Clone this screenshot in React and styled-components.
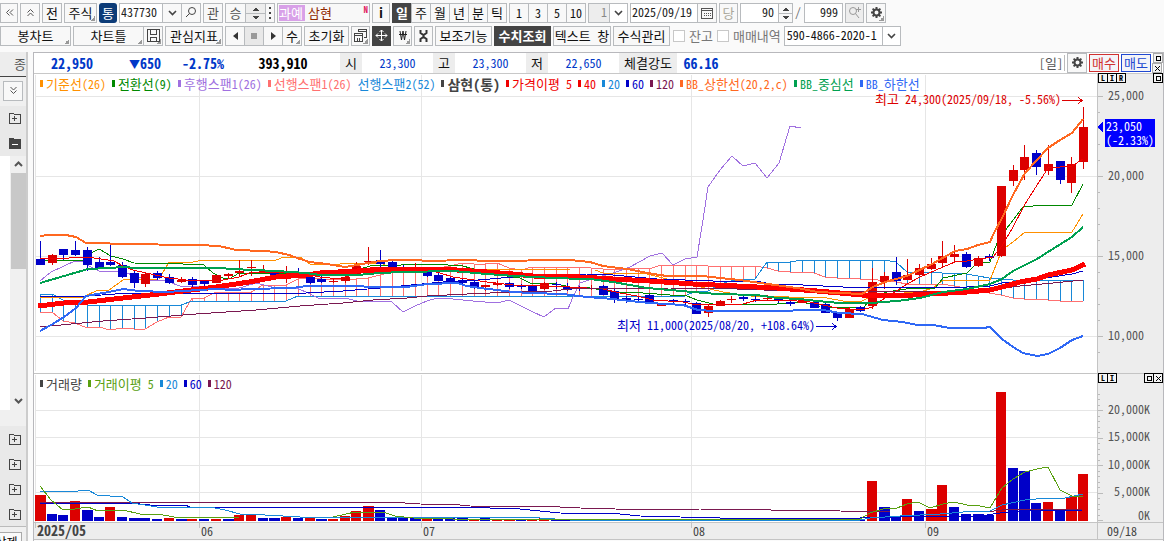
import React from 'react'
import styled, { createGlobalStyle, css } from 'styled-components'

const RED = '#dc0000'
const BLUE = '#0000c8'

// pixel x of the n-th candle
const cx = (i) => Math.round(40 + i * 11.72)

// direction, high, body top, body bottom, low
const candles = [
  ['b', 241, 259, 265, 265], ['r', 254, 255, 263, 265], ['b', 249, 249, 255, 260], ['b', 241, 250, 255, 256],
  ['b', 247, 250, 265, 271], ['b', 257, 262, 268, 268], ['b', 245, 262, 265, 266], ['b', 262, 265, 277, 278],
  ['b', 271, 273, 283, 288], ['r', 273, 274, 284, 287], ['b', 271, 273, 278, 280], ['b', 274, 277, 283, 284],
  ['r', 277, 280, 282, 283], ['b', 277, 279, 285, 287], ['b', 280, 281, 284, 286], ['r', 275, 275, 283, 283],
  ['r', 273, 274, 276, 279], ['r', 260, 271, 273, 277], ['r', 260, 267, 268, 276], ['r', 265, 271, 273, 273],
  ['b', 271, 272, 276, 276], ['r', 266, 275, 276, 283], ['b', 268, 272, 275, 275], ['b', 277, 277, 283, 284],
  ['b', 276, 279, 282, 283], ['r', 278, 281, 282, 283], ['r', 269, 277, 281, 283], ['r', 262, 266, 274, 274],
  ['r', 247, 261, 262, 265], ['b', 250, 260, 264, 270], ['b', 259, 262, 270, 270], ['b', 265, 268, 269, 270],
  ['r', 263, 268, 269, 270], ['b', 267, 272, 276, 277], ['b', 273, 275, 281, 281], ['b', 276, 278, 281, 284],
  ['b', 278, 280, 283, 284], ['b', 281, 282, 288, 289], ['r', 285, 285, 287, 291], ['r', 281, 283, 285, 286],
  ['b', 282, 283, 287, 289], ['b', 284, 285, 287, 289], ['b', 286, 286, 292, 292], ['r', 282, 283, 289, 290],
  ['b', 282, 284, 285, 289], ['b', 283, 287, 290, 291], ['b', 286, 287, 288, 291], ['r', 285, 288, 289, 290],
  ['b', 285, 286, 295, 295], ['b', 289, 291, 299, 303], ['b', 296, 298, 300, 303], ['b', 297, 299, 300, 302],
  ['b', 294, 295, 302, 303], ['r', 303, 303, 306, 306], ['b', 299, 300, 301, 304], ['b', 299, 301, 302, 305],
  ['b', 302, 303, 314, 314], ['r', 304, 306, 313, 317], ['r', 300, 301, 306, 306], ['r', 296, 299, 300, 303],
  ['b', 294, 297, 299, 301], ['b', 296, 299, 300, 302], ['r', 295, 298, 299, 300], ['b', 297, 298, 301, 303],
  ['b', 300, 302, 304, 306], ['r', 300, 300, 303, 303], ['b', 301, 302, 308, 308], ['b', 302, 304, 313, 313],
  ['b', 312, 313, 318, 321], ['r', 307, 309, 318, 318], ['b', 306, 307, 311, 312], ['r', 268, 282, 306, 309],
  ['r', 272, 276, 282, 289], ['b', 257, 272, 281, 285], ['r', 259, 275, 280, 280], ['r', 264, 268, 275, 276],
  ['r', 258, 264, 269, 270], ['r', 241, 256, 263, 268], ['r', 245, 254, 257, 262], ['b', 252, 254, 267, 268],
  ['r', 256, 258, 266, 267], ['b', 254, 256, 258, 261], ['r', 186, 186, 256, 257], ['r', 165, 170, 181, 186],
  ['r', 145, 157, 170, 180], ['b', 150, 153, 167, 175], ['r', 145, 164, 171, 175], ['b', 161, 161, 180, 184],
  ['r', 157, 164, 183, 193], ['r', 107, 127, 162, 169],
]

const spanA = [
  312, 312, 321, 323, 328, 327, 330, 328, 329, 329, 322, 317, 317, 298, 298, 292, 292, 292, 292, 285,
  285, 285, 279, 278, 279, 279, 279, 279, 278, 275, 272, 268, 268, 268, 268, 266, 263, 264, 264, 263,
  268, 270, 267, 267, 267, 267, 267, 268, 269, 269, 269, 268, 269, 265, 265, 265, 265, 266, 266, 266,
  266, 266, 268, 271, 272, 272, 273, 277, 278, 278, 279, 279, 281, 282, 284, 284, 284, 284, 286, 288,
  290, 293, 295, 298, 299, 299, 300, 301, 301, 301,
]
const spanB = [
  294, 294, 300, 301, ...Array(9).fill(305), ...Array(9).fill(301), ...Array(34).fill(296), 291, 291,
  284, 281, 280, 279, 262, 262, 262, ...Array(8).fill(260), 262, 272, 272, 272, 273, 273, 274, 276, 278, 279,
  280, 280, 280, 280, 280, 280, 280,
].slice(0, 90)

const lines = {
  lagging: '40,281 51,272 64,266 75,261 83,262 89,266 99,271 119,271 133,275 149,280 166,281 183,287 203,286 216,288 236,289 256,283 276,288 296,288 306,292 320,299 345,298 357,301 380,301 392,302 403,312 415,306 427,301 437,298 453,299 473,301 497,303 509,300 533,312 544,317 556,308 568,309 573,297 580,283 592,279 613,273 630,267 650,256 662,253 673,265 685,259 697,257 703,220 708,187 720,170 732,156 743,166 755,163 767,178 779,163 790,126 801,128',
  base: '40,297 83,297 98,290 109,290 123,280 159,279 169,262 193,262 203,260 276,260 284,257 300,257 310,264 340,264 380,263 393,268 467,268 473,269 570,270 595,270 603,273 647,274 667,279 687,284 710,289 723,292 750,296 827,298 843,301 862,301 873,295 920,292 933,288 943,280 990,280 1002,250 1013,242 1025,232 1072,232 1083,214',
  turn: '40,260 83,260 91,253 99,249 111,256 123,259 134,263 183,264 204,265 213,273 223,278 229,279 239,273 306,273 357,270 370,266 433,264 463,266 477,270 500,275 520,278 530,283 557,284 570,287 590,288 613,292 643,293 670,295 687,296 697,300 713,304 777,304 803,302 820,307 863,308 873,297 887,292 913,288 935,288 943,278 967,273 977,263 990,262 997,243 1007,228 1023,207 1043,205 1072,205 1083,184',
  ma5: '40,259 69,258 86,257 101,259 114,261 123,266 133,270 146,273 169,278 186,280 223,280 239,277 249,273 276,272 310,275 320,277 340,279 357,273 370,268 387,267 413,267 427,270 440,273 453,277 467,279 487,282 513,285 547,286 570,287 603,289 620,293 637,296 653,300 683,302 697,305 743,304 757,300 783,300 810,302 823,305 837,308 862,310 872,307 885,298 895,292 907,284 920,277 943,267 955,262 967,261 980,259 993,257 1002,246 1013,227 1025,204 1048,168 1072,166 1083,159',
  ma40: '38,306 64,303 88,302 123,298 159,294 183,291 216,287 249,282 276,277 306,275 320,273 357,271 400,270 430,269 457,270 487,272 513,274 533,276 580,277 613,279 650,281 693,284 737,286 777,288 817,291 840,293 862,295 897,296 930,294 967,292 990,290 1002,287 1020,282 1037,279 1048,275 1072,270 1085,264',
  ma60: '40,296 88,296 129,293 306,293 343,291 380,288 443,282 467,281 490,279 513,277 553,275 587,274 613,275 657,279 713,281 757,281 770,284 803,285 843,287 967,287 990,286 1002,283 1033,280 1072,274 1083,271',
  ma120: '40,327 103,321 146,318 196,314 256,310 300,306 343,303 373,300 407,298 427,296 467,294 513,292 553,291 570,289 670,288 737,289 790,291 913,292 990,290 1020,286 1053,283 1083,280',
  upper: '40,236 49,235 66,235 76,237 86,243 104,243 116,244 199,245 219,246 236,250 263,251 276,252 289,255 300,259 310,262 327,264 345,267 357,265 368,263 380,261 397,260 417,260 427,261 467,260 487,261 570,260 590,262 603,266 627,269 653,274 667,276 703,276 720,278 740,280 760,283 783,286 803,289 817,292 862,294 873,287 885,282 907,276 932,264 955,251 967,249 978,245 990,242 993,235 1002,218 1013,195 1025,173 1037,160 1048,148 1060,140 1072,133 1083,119',
  middle: '40,283 64,276 88,269 109,268 123,267 136,268 219,268 233,269 253,270 276,271 306,273 320,275 357,275 380,273 403,272 453,271 487,274 500,275 533,277 580,279 590,279 613,282 647,288 670,290 693,292 717,294 757,295 777,298 800,299 817,301 840,303 870,303 897,301 920,298 943,292 967,289 990,284 1002,279 1013,271 1037,259 1048,252 1072,237 1083,227',
  lower: '40,331 51,325 64,317 76,308 86,296 109,292 123,289 139,291 166,292 216,289 233,290 249,289 293,288 306,286 357,286 370,287 407,287 427,284 457,283 467,286 480,288 497,290 513,292 530,293 563,294 587,297 613,299 630,301 650,303 683,305 698,310 713,311 783,311 803,310 823,310 840,313 862,314 883,320 903,322 917,325 933,325 950,328 983,328 990,327 1002,339 1013,347 1023,353 1037,356 1048,354 1060,348 1072,340 1083,336',
}

// top of every volume bar, colour included
const volumes = (
  'r495 b514 b515 r501 b510 b517 r507 b517 b518 b518 b519 r518 b519 r519 b519 r519 b519 r515 r515 b518 ' +
  'b518 r517 b518 r517 b519 r519 r516 r511 r506 b510 b517 b518 b518 r518 b519 b518 b518 r519 b518 r520 ' +
  'r520 b520 r520 r518 b520 b520 b520 b520 r520 b520 b520 r520 b520 b520 r520 r520 b520 b520 r520 b520 ' +
  'r520 b520 r520 b520 b520 r520 r520 r520 r520 r520 b520 r481 b507 b517 r499 b511 r509 r485 b507 b514 ' +
  'b514 b515 r392 b468 b471 b503 r502 b511 r497 r474'
).split(' ')

const volLines = [
  ['#7a1850', '40,502 390,502 420,504 460,505 470,506 560,507 580,508 650,510 700,509 840,511 890,512 987,512 1002,510 1083,509'],
  [BLUE, '40,503 130,503 150,505 185,505 190,507 340,507 460,507 490,508 520,509 540,511 560,513 620,514 640,516 720,518 860,518 900,517 980,516 1000,513 1030,511 1083,510'],
  ['#1888d8', '40,491 69,492 88,490 97,495 123,497 132,503 157,507 210,507 225,510 240,514 265,515 300,517 470,517 540,518 570,520 860,520 870,518 900,516 940,514 975,511 990,511 1002,505 1025,500 1048,498 1065,498 1083,494'],
  ['#58a010', '40,486 51,500 63,510 75,509 88,507 98,511 110,510 123,510 140,514 163,515 180,518 240,517 333,517 355,512 383,512 395,516 413,518 453,519 860,519 870,513 883,509 897,508 907,504 918,502 930,508 943,504 954,502 967,505 980,506 990,508 1002,488 1013,479 1025,472 1037,469 1048,467 1060,490 1072,496 1083,497'],
]

const priceLegend = [
  ['기준선(26)', '#ff9000'],
  ['전환선(9)', '#008800'],
  ['후행스팬1(26)', '#a070e0'],
  ['선행스팬1(26)', '#ff7070'],
  ['선행스팬2(52)', '#1888d8', 'nomark'],
  ['삼현(통)', '#444', 'bold'],
  ['가격이평 5', '#f00000'],
  ['40', '#f00000'],
  ['20', '#1888d8'],
  ['60', BLUE],
  ['120', '#7a1850'],
  ['BB_상한선(20,2,c)', '#ff6820'],
  ['BB_중심선', '#00a050'],
  ['BB_하한선', '#2f68f5'],
]
const volumeLegend = [
  ['거래량', '#444'],
  ['거래이평 5', '#58a010'],
  ['20', '#1888d8'],
  ['60', BLUE],
  ['120', '#7a1850'],
]

const Chevron = () => (
  <svg width="9" height="6"><path d="M1 1l3.500 3.500L8 1" fill="none" stroke="#444" strokeWidth="1.600" /></svg>
)
const Gear = ({ color = '#444' }) => (
  <svg width="13" height="13" viewBox="-6.500 -6.500 13 13">
    <circle r="3" fill="none" stroke={color} strokeWidth="2" />
    {[0, 45, 90, 135, 180, 225, 270, 315].map((a) => (
      <rect key={a} x="-1" y="-5.500" width="2" height="2.500" fill={color} transform={`rotate(${a})`} />
    ))}
  </svg>
)
const Search = ({ plus, color = '#444' }) => (
  <svg width="13" height="13" fill="none" stroke={color}>
    <circle cx={plus ? 5 : 7} cy="5" r="3.500" />
    <path d={plus ? 'M7.500 7.500L11 12M10.500 1v5M8 3.500h5' : 'M4.500 7.500L1 11'} />
  </svg>
)
const Spin = ({ w = 20 }) => (
  <svg width={w} height="18" shapeRendering="crispEdges">
    <path d={`M${w / 2 - 3} 7h6l-3-4zM${w / 2 - 3} 12h6l-3 4z`} fill="#444" />
    <path d={`M0 9.500h${w}`} stroke="#b8bbbe" />
  </svg>
)
const Doubles = ({ turn = 0 }) => (
  <svg width="9" height="9" viewBox="0 0 9 9">
    <path d="M4.500 1.500l-3 3 3 3M8 1.500l-3 3 3 3" fill="none" stroke="#555" transform={`rotate(${turn} 4.500 4.500)`} />
  </svg>
)
const Folder = ({ filled }) => (
  <svg width="12" height="12" shapeRendering="crispEdges">
    <path d="M.5 1.500h4l1 1h6v9H.5z" fill={filled ? '#444' : 'none'} stroke="#444" />
    <path d={filled ? 'M3 7.500h6' : 'M3 6.500h5M5.500 4v5'} stroke={filled ? '#fff' : '#444'} />
  </svg>
)

// hangul runs are set one size up so that they take two latin cells
const runs = (text, Tag) => text.split(/([가-힣]+)/).map((s, i) => (i % 2 ? <Tag key={i}>{s}</Tag> : s))

const Legend = ({ items }) => (
  <LegendRow>
    {items.map(([text, color, kind], i) => (
      <LegendItem key={i} $color={color} $bold={kind === 'bold'}>
        {kind !== 'nomark' && <Mark $color={color} />}
        <span>{kind === 'bold' ? text : runs(text, Ko)}</span>
      </LegendItem>
    ))}
  </LegendRow>
)

const Candle = ({ i, d: [dir, high, top, bottom, low] }) => {
  const color = dir === 'r' ? RED : BLUE
  return (
    <g fill={color}>
      <rect x={cx(i)} y={high} width="1" height={low - high} />
      <rect x={cx(i) - 4} y={top} width="9" height={bottom - top} />
    </g>
  )
}

const Line = ({ points, color, w = 1 }) => (
  <polyline points={points} fill="none" stroke={color} strokeWidth={w} strokeLinejoin="round" />
)

const PricePlot = () => (
  <Plot $h={299}>
    <g transform="translate(-34 -74)">
      <g fill="#e6e6e6">
        {[96, 176, 256, 336].map((y) => <rect key={y} x="36" y={y} width="3000" height="1" />)}
        {[35, 199, 421, 691, 925].map((x) => <rect key={x} x={x} y="75" width="1" height="296" />)}
      </g>
      {spanA.map((a, i) => (
        <rect key={i} x={cx(i)} y={Math.min(a, spanB[i])} width="1" height={Math.abs(a - spanB[i])}
          fill={a < spanB[i] ? '#ff7070' : '#1888d8'} />
      ))}
      <Line color="#ff7070" points={spanA.map((y, i) => `${cx(i)},${y}`).join(' ')} />
      <Line color="#1888d8" points={spanB.map((y, i) => `${cx(i)},${y}`).join(' ')} />
      <Line color="#a070e0" points={lines.lagging} />
      <Line color="#ff9000" points={lines.base} />
      <Line color="#008800" points={lines.turn} />
      {candles.map((d, i) => <Candle key={i} i={i} d={d} />)}
      <Line color="#f00000" points={lines.ma5} />
      <Line color="#7a1850" points={lines.ma120} />
      <Line color={BLUE} points={lines.ma60} />
      <Line color="#ff0000" points={lines.ma40} w={5} />
      <Line color="#ff6820" points={lines.upper} w={2} />
      <Line color="#00a050" points={lines.middle} w={2} />
      <Line color="#2f68f5" points={lines.lower} w={2} />
      <Note x="875" y="104" fill="#dc0000">{runs('최고 24,300(2025/09/18, -5.56%)', KoSvg)}</Note>
      <path d="M1062 100.500h20M1078 97l4 3.500-4 3.500" fill="none" stroke="#dc0000" />
      <Note x="617" y="330" fill={BLUE}>{runs('최저 11,000(2025/08/20, +108.64%)', KoSvg)}</Note>
      <path d="M816 326.500h20M832 323l4 3.500-4 3.500" fill="none" stroke={BLUE} />
    </g>
  </Plot>
)

const VolumePlot = () => (
  <Plot $h={148}>
    <g transform="translate(-34 -374)">
      <g fill="#e6e6e6">
        {[410, 437, 465, 492].map((y) => <rect key={y} x="36" y={y} width="3000" height="1" />)}
        {[35, 199, 421, 691, 925].map((x) => <rect key={x} x={x} y="375" width="1" height="147" />)}
      </g>
      {volumes.map((v, i) => (
        <rect key={i} x={cx(i) - 5} y={v.slice(1)} width={i % 4 ? 10 : 11} height={521 - v.slice(1)}
          fill={v[0] === 'r' ? RED : BLUE} />
      ))}
      {volLines.map(([color, points]) => <Line key={color} color={color} points={points} />)}
    </g>
  </Plot>
)

const PriceAxis = () => (
  <Plot $h={299}>
    <g transform="translate(-1098 -74)">
      {Array.from({ length: 17 }, (_, i) => 96 + i * 16).map((y, i) => (
        <rect key={y} x="1098" y={y} width={i % 5 ? 2 : 5} height="1" fill="#bbb" />
      ))}
      {[25, 20, 15, 10].map((n, i) => <Note key={n} x="1108" y={100 + i * 80} fill="#555">{`${n},000`}</Note>)}
      <path d="M1097 127l6-6v12z" fill="#0000ff" />
      <rect x="1105" y="119" width="50" height="28" fill="#0000ff" />
      <Note x="1106" y="131" fill="#fff">23,050</Note>
      <Note x="1106" y="145" fill="#fff">(-2.33%)</Note>
    </g>
  </Plot>
)

const VolumeAxis = () => (
  <Plot $h={148}>
    <g transform="translate(-1098 -374)">
      {Array.from({ length: 24 }, (_, i) => Math.round(520 - i * 5.5)).map((y, i) => (
        <rect key={y} x="1098" y={y} width={i % 5 ? 2 : 5} height="1" fill="#bbb" />
      ))}
      {[['20,000K', 414], ['15,000K', 441], ['10,000K', 469], ['5,000K', 496], ['0K', 520]].map(([t, y]) => (
        <Note key={t} x="1150" y={y} fill="#555" textAnchor="end">{t}</Note>
      ))}
    </g>
  </Plot>
)

const BoxIcon = ({ kind }) => (
  <svg width="9" height="9" fill="none" stroke="currentColor">
    {kind === 'box' ? <rect x="2.500" y="2.500" width="4" height="4" /> : <path d="M2 2l5 5M7 2l-5 5" />}
  </svg>
)

export default function App() {
  return (
    <Page>
      <Global />
      <Toolbars>
        <Bar>
          <Btn $w={18} aria-label="접기"><Doubles /></Btn>
          <Btn $w={20} aria-label="위로"><Doubles turn={90} /></Btn>
          <Btn $w={20}>전</Btn>
          <Btn $w={33} $corner>주식</Btn>
          <Badge>통</Badge>
          <Group>
            <Field $w={44} aria-label="종목코드" defaultValue="437730" />
            <Btn $w={20} aria-label="목록"><Chevron /></Btn>
            <Btn $w={20} aria-label="검색"><Search /></Btn>
          </Group>
          <Btn $w={20} $color="#555">관</Btn>
          <Group>
            <Btn $w={21} $color="#555">승</Btn>
            <Btn $w={21} $on="#ededed" aria-label="이동"><Spin /></Btn>
            <Btn $w={10} aria-label="더보기">
              <svg width="2" height="12"><path d="M1 0v12" stroke="#444" strokeWidth="2" strokeDasharray="2 3" /></svg>
            </Btn>
          </Group>
          <Stock>
            <mark>과예</mark>
            <span>삼현</span>
            <sup>N</sup>
          </Stock>
          <Btn $w={18} $bold>i</Btn>
          <Group>
            <Btn $w={20} $dark>일</Btn>
            {['주', '월', '년', '분', '틱'].map((t) => <Btn key={t} $w={20}>{t}</Btn>)}
          </Group>
          <Group>
            {['1', '3', '5', '10'].map((t) => <Btn key={t} $w={20} $num>{t}</Btn>)}
          </Group>
          <SelectBox $w={40} $gray>
            <select aria-label="주기" defaultValue="1"><option>1</option></select>
            <i><Chevron /></i>
          </SelectBox>
          <Group>
            <Field $w={68} aria-label="날짜" defaultValue="2025/09/19" />
            <Btn $w={20} aria-label="달력">
              <svg width="12" height="12" fill="none" stroke="#555" shapeRendering="crispEdges">
                <path d="M.5 1.500h11v10H.5zM1 3.500h10" />
                <path d="M3 6.500h7M3 8.500h7" strokeDasharray="1 1" />
              </svg>
            </Btn>
          </Group>
          <Btn $w={19} $color="#aaa89c">당</Btn>
          <Group>
            <Field $w={39} $right aria-label="봉 개수" defaultValue="90" />
            <Btn $w={15} aria-label="증감"><Spin w={14} /></Btn>
          </Group>
          <Slash>/</Slash>
          <Field $w={39} $right aria-label="전체 개수" defaultValue="999" />
          <Btn $w={19} $on="#ededed" aria-label="확대"><Search plus color="#999" /></Btn>
          <Btn $w={20} $corner aria-label="설정"><Gear /></Btn>
        </Bar>
        <Bar>
          <Btn $w={71} $corner>봉차트</Btn>
          <Group>
            <Btn $w={71} $corner>차트틀</Btn>
            <Btn $w={20} $corner aria-label="저장">
              <svg width="13" height="13" fill="none" stroke="#444" shapeRendering="crispEdges">
                <path d="M.5.5h12v12H.5zM3.500 1v4h6V1M3.500 12V8h6v4" />
              </svg>
            </Btn>
          </Group>
          <Btn $w={58} $corner>관심지표</Btn>
          <Group>
            <Btn $w={20} aria-label="이전"><svg width="5" height="8"><path d="M5 0v8L0 4z" fill="#333" /></svg></Btn>
            <Btn $w={20} $on="#e8e8e8" aria-label="정지"><svg width="6" height="6"><rect width="6" height="6" fill="#999" /></svg></Btn>
            <Btn $w={20} aria-label="다음"><svg width="5" height="8"><path d="M0 0v8l5-4z" fill="#333" /></svg></Btn>
            <Btn $w={20} $corner>수</Btn>
          </Group>
          <Btn $w={45}>초기화</Btn>
          <Btn $w={19} $corner aria-label="창 배열">
            <svg width="13" height="13" fill="none" stroke="#444" shapeRendering="crispEdges">
              <path d="M4.500 3V.5h8v8H10M5 2.500h7M.5 4.500h8v8h-8zM1 6.500h7M3.500 12V9M5.500 12V9" />
            </svg>
          </Btn>
          <Btn $w={19} $dark aria-label="십자선">
            <svg width="13" height="13" fill="none" stroke="#fff">
              <path d="M6.500 1v11M1 6.500h11M4.500 3l2-2 2 2M4.500 10l2 2 2-2M3 4.500l-2 2 2 2M10 4.500l2 2-2 2" />
            </svg>
          </Btn>
          <Btn $w={19} $corner aria-label="원화">
            <svg width="8" height="11" fill="none" stroke="#222"><path d="M1 1l1.500 9L4 1l1.500 9L7 1M0 4.500h8" /></svg>
          </Btn>
          <Btn $w={19} aria-label="도구">
            <svg width="9" height="12" fill="none" stroke="#333" strokeWidth="2"><path d="M1.500 0v3l3 2 3-2V0M4.500 4v4M1.500 12V9l3-2 3 2v3" /></svg>
          </Btn>
          <Btn $w={57}>보조기능</Btn>
          <Btn $w={57} $dark>수치조회</Btn>
          <Btn $w={58}>텍스트 창</Btn>
          <Btn $w={57}>수식관리</Btn>
          <Check><input type="checkbox" />잔고</Check>
          <Check><input type="checkbox" />매매내역</Check>
          <SelectBox $w={117}>
            <select aria-label="계좌" defaultValue="590-4866-2020-1"><option>590-4866-2020-1</option></select>
            <i><Chevron /></i>
          </SelectBox>
        </Bar>
      </Toolbars>

      <Body>
        <Side>
          <SideHead>종</SideHead>
          <SideTop><Btn $w={20} aria-label="펼치기"><Doubles turn={270} /></Btn></SideTop>
          <SideCell $h={24}><Folder /></SideCell>
          <SideCell $h={26}><Folder filled /></SideCell>
          <Tree>
            <TreeList />
            <ScrollBar>
              <svg width="9" height="6"><path d="M1 5l3.500-3.500L8 5" fill="none" stroke="#555" strokeWidth="2" /></svg>
              <Thumb />
              <svg width="9" height="6"><path d="M1 1l3.500 3.500L8 1" fill="none" stroke="#555" strokeWidth="2" /></svg>
            </ScrollBar>
          </Tree>
          <SideCell $h={16} $light />
          {[0, 1, 2, 3].map((n) => <SideCell key={n} $h={25}><Folder /></SideCell>)}
          <SideFoot><button>삭제</button></SideFoot>
        </Side>

        <Main>
          <Info>
            <Val $w={76} $bold>22,950</Val>
            <Val $w={70} $bold><small>▼</small>650</Val>
            <Val $w={46} $bold>-2.75%</Val>
            <Val $w={114} $bold $color="#000">393,910</Val>
            <Cap $w={22}>시</Cap>
            <Val $w={71}>23,300</Val>
            <Cap $w={22}>고</Cap>
            <Val $w={71}>23,300</Val>
            <Cap $w={22}>저</Cap>
            <Val $w={71}>22,650</Val>
            <Cap $w={58}>체결강도</Cap>
            <Val $w={48} $bold>66.16</Val>
            <Right>
              <Unit>[<Ko>일</Ko>]</Unit>
              <Btn $w={20} aria-label="차트 설정"><Gear /></Btn>
              <Order $color="#d03030">매수</Order>
              <Order $color="#2048d0">매도</Order>
              <MiniCol>
                <Mini $gray aria-label="최대화"><BoxIcon kind="box" /></Mini>
                <Mini $gray aria-label="닫기"><BoxIcon kind="x" /></Mini>
              </MiniCol>
            </Right>
          </Info>
          <Panel>
            <Layer>
              <PricePlot />
              <Legend items={priceLegend} />
            </Layer>
            <Axis>
              <PriceAxis />
              <MiniRow>
                <div><Mini>L</Mini><Mini>I</Mini><Mini>R</Mini></div>
                <div><Mini aria-label="최대화"><BoxIcon kind="box" /></Mini></div>
              </MiniRow>
            </Axis>
          </Panel>
          <Panel>
            <Layer>
              <VolumePlot />
              <Legend items={volumeLegend} />
            </Layer>
            <Axis>
              <VolumeAxis />
              <MiniRow>
                <div><Mini>L</Mini><Mini>I</Mini></div>
                <div><Mini aria-label="최대화"><BoxIcon kind="box" /></Mini><Mini aria-label="닫기"><BoxIcon kind="x" /></Mini></div>
              </MiniRow>
            </Axis>
          </Panel>
          <Dates>
            <Month $w={164} $bold>2025/05</Month>
            <Month $w={222}>06</Month>
            <Month $w={270}>07</Month>
            <Month $w={234}>08</Month>
            <Month $w={100}>09</Month>
            <Last>09/18</Last>
          </Dates>
        </Main>
      </Body>
    </Page>
  )
}

const Global = createGlobalStyle`
  * { box-sizing: border-box; }
  body { margin: 0; background: #fafafa; }
  body, button, input, select {
    font-family: "Noto Sans Mono CJK KR", "Liberation Mono", "Noto Sans CJK KR", monospace;
    font-size: 12px;
    line-height: 16px;
  }
  svg { display: block; flex: none; }
`
const Page = styled.div`
  min-height: 100vh;
  display: flex;
  flex-direction: column;
  overflow: hidden;
`
const Toolbars = styled.div`
  display: flex;
  flex-direction: column;
  gap: 3px;
  padding: 3px 0 6px;
`
const Bar = styled.div`
  display: flex;
  gap: 2px;
  height: 20px;
`
const Group = styled.div`
  display: flex;
  > * + * { margin-left: -1px; }
`
const Ko = styled.span`
  font-size: 13px;
`
const KoSvg = styled.tspan`
  font-size: 13px;
`
const Btn = styled.button`
  flex: none;
  display: flex;
  align-items: center;
  justify-content: center;
  width: ${p => p.$w}px;
  height: 20px;
  padding: 0 0 1px;
  white-space: nowrap;
  border: 1px solid #b8bbbe;
  background-color: ${p => p.$on || '#f8f8f8'};
  color: ${p => p.$color || '#111'};
  font-size: ${p => (p.$num ? 12 : 13)}px;
  font-weight: ${p => (p.$bold ? 700 : 400)};
  ${p => p.$corner && css`
    background-image: linear-gradient(135deg, transparent 50%, #999 50%);
    background-size: 5px 5px;
    background-position: right 1px bottom 1px;
    background-repeat: no-repeat;
  `}
  ${p => p.$dark && css`
    background-color: #444;
    border-color: #444;
    color: #fff;
    font-weight: 700;
  `}
`
const Badge = styled.button`
  width: 18px;
  padding: 0 0 1px;
  border: 0;
  border-radius: 3px;
  background: #0d3c78;
  color: #fff;
  font-size: 13px;
`
const Field = styled.input`
  width: ${p => p.$w}px;
  height: 20px;
  padding: 0 ${p => (p.$right ? 4 : 1)}px 3px;
  border: 1px solid #b8bbbe;
  background: #fff;
  color: #222;
  text-align: ${p => (p.$right ? 'right' : 'left')};
`
const Stock = styled.button`
  display: flex;
  width: 93px;
  padding: 1px;
  border: 1px solid #b8bbbe;
  background: #f8f8f8;
  color: #902800;
  font-size: 13px;
  text-align: left;
  mark { width: 26px; background: #d8a0e8; color: #fff; }
  span { flex: 1; padding-left: 3px; }
  sup { font-size: 9px; line-height: 9px; font-weight: 700; color: #e02060; }
`
const SelectBox = styled.div`
  display: flex;
  width: ${p => p.$w}px;
  height: 20px;
  border: 1px solid #b8bbbe;
  background: #fff;
  select {
    flex: 1;
    min-width: 0;
    padding: 0 2px 2px;
    border: 0;
    appearance: none;
    background: ${p => (p.$gray ? '#ededed' : '#fff')};
    color: ${p => (p.$gray ? '#888' : '#111')};
    text-align: ${p => (p.$gray ? 'right' : 'left')};
  }
  i {
    width: 18px;
    display: flex;
    align-items: center;
    justify-content: center;
    border-left: 1px solid #b8bbbe;
  }
`
const Slash = styled.span`
  width: 7px;
  line-height: 18px;
  color: #666;
`
const Check = styled.label`
  display: flex;
  align-items: center;
  gap: 4px;
  padding: 0 1px;
  color: #777;
  font-size: 13px;
  input {
    appearance: none;
    width: 12px;
    height: 12px;
    margin: 0;
    border: 1px solid #c8c8c8;
    background: #fff;
  }
`
const Body = styled.div`
  flex: 1;
  display: flex;
  gap: 5px;
`
const Side = styled.aside`
  width: 28px;
  display: flex;
  flex-direction: column;
  border-right: 2px solid #ccc;
  background: #f0f0f0;
`
const SideHead = styled.div`
  height: 25px;
  padding-left: 14px;
  font-size: 13px;
  line-height: 23px;
  color: #555;
  background: #ededed;
  border-bottom: 1px solid #444;
`
const SideTop = styled.div`
  height: 29px;
  padding: 4px 3px;
`
const SideCell = styled.div`
  height: ${p => p.$h}px;
  display: flex;
  align-items: center;
  padding-left: 9px;
  background: ${p => (p.$light ? '#f0f0f0' : '#e9e9e9')};
`
const Tree = styled.div`
  flex: 1;
  display: flex;
`
const TreeList = styled.div`
  width: 10px;
  background: #fff;
`
const ScrollBar = styled.div`
  flex: 1;
  display: flex;
  flex-direction: column;
  align-items: center;
  gap: 6px;
  padding: 5px 0 6px;
  background: #f0f0f0;
  svg:last-child { margin-top: auto; }
`
const Thumb = styled.div`
  width: 15px;
  height: 96px;
  background: #c8c8c8;
`
const SideFoot = styled.div`
  height: 15px;
  overflow: hidden;
  padding-top: 5px;
  border-top: 1px solid #bbb;
  button {
    width: 22px;
    height: 20px;
    padding: 0;
    border: 1px solid #aaa;
    border-left: 0;
    background: #fafafa;
    text-indent: -8px;
    overflow: hidden;
  }
`
const Main = styled.main`
  flex: 1;
  min-width: 0;
  border: 1px solid #b8b8bc;
  border-bottom: 0;
`
const Info = styled.div`
  display: flex;
  align-items: center;
  height: 21px;
  background: #fff;
  border-bottom: 1px solid #c8c8c8;
`
const Val = styled.div`
  width: ${p => p.$w}px;
  text-align: center;
  white-space: nowrap;
  color: ${p => p.$color || '#0038c8'};
  font-weight: ${p => (p.$bold ? 700 : 400)};
  font-size: ${p => (p.$bold ? 14 : 12)}px;
  small { font-size: 11px; }
`
const Cap = styled.div`
  width: ${p => p.$w}px;
  line-height: 20px;
  font-size: 13px;
  text-align: center;
  background: #ededed;
  color: #111;
`
const Right = styled.div`
  margin-left: auto;
  display: flex;
  align-items: center;
  gap: 2px;
`
const Unit = styled.span`
  padding-right: 1px;
  color: #555;
  border-right: 1px solid #bbb;
`
const Order = styled.button`
  width: 30px;
  height: 18px;
  padding: 0;
  border: 1px solid ${p => p.$color};
  background: #f4f4f8;
  color: ${p => p.$color};
  font-size: 13px;
`
const MiniCol = styled.div`
  display: flex;
  flex-direction: column;
`
const Mini = styled.button`
  width: 10px;
  height: 10px;
  padding: 0;
  display: flex;
  align-items: center;
  justify-content: center;
  border: 1px solid ${p => (p.$gray ? '#aaa' : '#000')};
  background: #f4f4f4;
  color: #000;
  font-size: 8px;
  line-height: 8px;
  font-weight: 700;
  & + & { margin-left: ${p => (p.$gray ? 0 : -1)}px; }
`
const MiniRow = styled.div`
  grid-area: 1 / 1;
  align-self: start;
  display: flex;
  justify-content: space-between;
  margin-top: -1px;
  div { display: flex; }
`
const Panel = styled.section`
  display: flex;
  border-bottom: 1px solid #c4c4c4;
  background: #fff;
`
const Layer = styled.div`
  flex: 1;
  min-width: 0;
  display: grid;
  grid-template-columns: minmax(0, 1fr);
`
const Axis = styled.div`
  width: 66px;
  display: grid;
  grid-template-columns: minmax(0, 1fr);
  border-left: 1px solid #c4c4c4;
  background: #ededed;
`
const Plot = styled.svg.attrs({ shapeRendering: 'crispEdges' })`
  grid-area: 1 / 1;
  width: 100%;
  height: ${p => p.$h}px;
`
const Note = styled.text`
  font-size: 12px;
  white-space: pre;
`
const LegendRow = styled.div`
  grid-area: 1 / 1;
  align-self: start;
  display: flex;
  gap: 6px;
  padding: 1px 6px;
  white-space: nowrap;
`
const LegendItem = styled.span`
  display: flex;
  align-items: center;
  gap: 3px;
  height: 17px;
  color: ${p => p.$color};
  font-size: ${p => (p.$bold ? 14 : 12)}px;
  font-weight: ${p => (p.$bold ? 700 : 400)};
`
const Mark = styled.i`
  width: 3px;
  height: 7px;
  background: ${p => p.$color};
`
const Dates = styled.div`
  display: flex;
  height: 17px;
  padding-left: 1px;
  background: #ededed;
  border-bottom: 1px solid #c4c4c4;
  color: #444;
`
const Month = styled.div`
  width: ${p => p.$w}px;
  padding-left: 2px;
  font-size: ${p => (p.$bold ? 14 : 12)}px;
  line-height: 15px;
  font-weight: ${p => (p.$bold ? 700 : 400)};
  background: linear-gradient(#c4c4c4, #c4c4c4) 0 0 / 1px 5px no-repeat;
`
const Last = styled.div`
  width: 66px;
  margin-left: auto;
  padding-left: 9px;
  border-left: 1px solid #c4c4c4;
`
